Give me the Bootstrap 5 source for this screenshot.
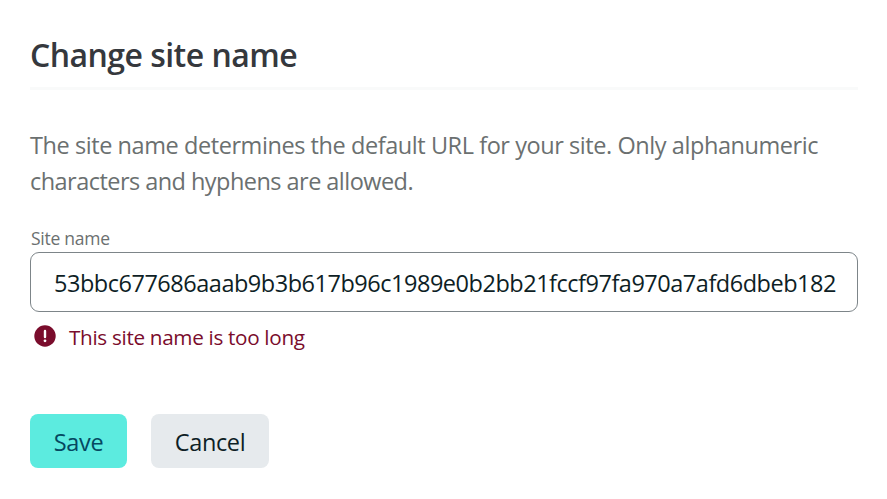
<!DOCTYPE html>
<html lang="en">
<head>
<meta charset="utf-8">
<meta name="viewport" content="width=device-width, initial-scale=1">
<title>Change site name</title>
<link rel="stylesheet" href="https://cdn.jsdelivr.net/npm/bootstrap@5.3.0/dist/css/bootstrap.min.css">
<style>
body { font-family: "Segoe UI", "Open Sans", "Noto Sans", sans-serif; color: #35383d; background: #fff; overflow: hidden; }
.page-pane { padding: 30px 29px 0 30px; }
.page-title { font-size: 32px; line-height: 50px; font-weight: 600; letter-spacing: -.54px; white-space: nowrap; }
.title-rule { height: 3px; background: #f9fafa; margin: 7px 0 37px; }
.intro { font-size: 23.5px; line-height: 36px; color: #6b7070; letter-spacing: -.43px; white-space: nowrap; }
.intro-end { letter-spacing: -.54px; }
.field-label { font-size: 17.5px; line-height: 24px; color: #6b7070; letter-spacing: -.25px; margin-top: 27px; padding: 0 0 2px 1px; }
.site-input { height: 60px; border: 1px solid #7d8589; border-radius: 9px; padding: 1px 15px 0 23px; font-size: 23.5px; letter-spacing: -.48px; color: #0e1e25; }
.site-error { color: #7a0c2c; font-size: 20.7px; line-height: 30px; letter-spacing: -.32px; margin-top: 8px; padding-left: 4px; gap: 13px; }
.error-icon { margin-bottom: 1px; }
.error-text { padding-top: 2px; }
.actions { margin-top: 62px; gap: 24px; }
.action-btn { height: 54px; border: 0; border-radius: 8px; font-size: 23.5px; letter-spacing: -.35px; padding: 3px 0 0; }
.save-btn, .save-btn:hover { width: 97px; background: #5cebdf; color: #054861; }
.cancel-btn, .cancel-btn:hover { width: 118px; background: #e6eaed; color: #0e1e25; }
</style>
<script src="https://cdn.jsdelivr.net/npm/bootstrap@5.3.0/dist/js/bootstrap.bundle.min.js"></script>
</head>
<body>
<main class="page-pane">
<h1 class="page-title mb-0">Change site name</h1>
<div class="title-rule"></div>
<p class="intro mb-0">The site name determines the default URL for your site. Only alphanumeric<br><span class="intro-end">characters and hyphens are allowed.</span></p>
<form>
<label class="field-label d-block" for="site">Site name</label>
<input class="site-input form-control" id="site" type="text" value="53bbc677686aaab9b3b617b96c1989e0b2bb21fccf97fa970a7afd6dbeb182">
<div class="site-error d-flex align-items-center">
<svg class="error-icon" width="22" height="22" viewBox="0 0 22 22" aria-hidden="true"><circle cx="11" cy="11" r="10.7" fill="#7a0c2c"/><path d="M11 6v6" stroke="#fff" stroke-width="2.4" stroke-linecap="round"/><circle cx="11" cy="15.8" r="1.4" fill="#fff"/></svg>
<span class="error-text">This site name is too long</span>
</div>
<div class="actions d-flex">
<button class="btn action-btn save-btn" type="button">Save</button>
<button class="btn action-btn cancel-btn" type="button">Cancel</button>
</div>
</form>
</main>
</body>
</html>
